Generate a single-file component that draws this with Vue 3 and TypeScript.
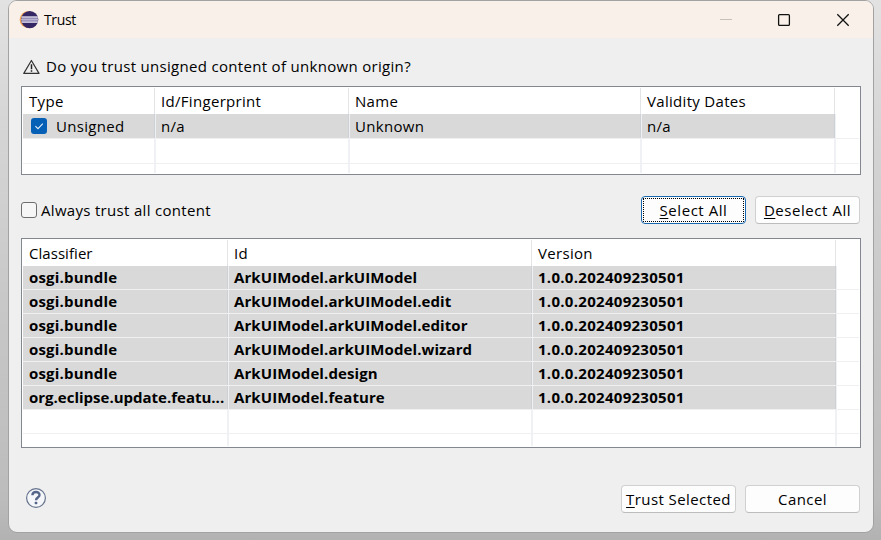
<script setup lang="ts">
interface Artifact {
  classifier: string
  id: string
  version: string
}

const version = '1.0.0.202409230501'
const artifacts: Artifact[] = [
  { classifier: 'osgi.bundle', id: 'ArkUIModel.arkUIModel', version },
  { classifier: 'osgi.bundle', id: 'ArkUIModel.arkUIModel.edit', version },
  { classifier: 'osgi.bundle', id: 'ArkUIModel.arkUIModel.editor', version },
  { classifier: 'osgi.bundle', id: 'ArkUIModel.arkUIModel.wizard', version },
  { classifier: 'osgi.bundle', id: 'ArkUIModel.design', version },
  { classifier: 'org.eclipse.update.featu...', id: 'ArkUIModel.feature', version },
]
</script>

<template>
  <div class="desktop">
    <div class="window">
      <header class="titlebar">
        <svg class="logo" width="20" height="20" viewBox="0 0 20 20">
          <circle cx="9" cy="9.6" r="8.4" fill="#f3a450" />
          <circle cx="10.7" cy="9.6" r="8.6" fill="#352763" />
          <rect x="2.6" y="6.4" width="16.2" height="6.4" fill="#8f86b2" />
          <rect x="2.6" y="6.4" width="16.2" height="1.3" fill="#d5d0e2" />
          <rect x="2.1" y="8.8" width="17.2" height="1.6" fill="#b9b2d0" />
          <rect x="2.6" y="11.5" width="16.2" height="1.3" fill="#d5d0e2" />
        </svg>
        <span class="title">Trust</span>
        <svg class="controls" width="132" height="14" viewBox="0 0 132 14" fill="none">
          <path d="M1 6.5H13" stroke="#c5c0b9" stroke-width="1" />
          <rect x="59.6" y="1.6" width="10.8" height="10.8" rx="1" stroke="#111" stroke-width="1.3" />
          <path d="M118.3 1.3L129.7 12.7M129.7 1.3L118.3 12.7" stroke="#111" stroke-width="1.3" />
        </svg>
      </header>

      <main class="body">
        <div class="question">
          <svg width="18" height="16" viewBox="0 0 18 16" fill="none">
            <path d="M9.4 1.5L17 14.4H1.8Z" stroke="#333" stroke-width="1.2" stroke-linejoin="round" />
            <path d="M9.5 5.2V10.2M9.5 11.3V12.7" stroke="#222" stroke-width="1.5" />
          </svg>
          <span>Do you trust unsigned content of unknown origin?</span>
        </div>

        <div class="table signers">
          <div class="row head">
            <span class="cell">Type</span><span class="cell">Id/Fingerprint</span><span class="cell">Name</span><span class="cell">Validity Dates</span><span class="cell rest"></span>
          </div>
          <div class="row picked">
            <span class="cell with-check">
              <svg width="16" height="16" viewBox="0 0 16 16" fill="none">
                <rect width="16" height="16" rx="3" fill="#0560b6" />
                <path d="M4.4 8.2L7 10.7L11.8 5.7" stroke="#e6f1fb" stroke-width="1.1" />
              </svg>
              <span>Unsigned</span>
            </span><span class="cell">n/a</span><span class="cell">Unknown</span><span class="cell">n/a</span><span class="cell rest"></span>
          </div>
          <div v-for="n in 2" :key="n" class="row"><span v-for="c in 5" :key="c" class="cell"></span></div>
        </div>

        <div class="options">
          <span class="checkbox"></span>
          <span class="always">Always trust all content</span>
          <button class="btn focused"><span><u>S</u>elect All</span></button>
          <button class="btn"><span><u>D</u>eselect All</span></button>
        </div>

        <div class="table artifacts">
          <div class="row head">
            <span class="cell classifier">Classifier</span><span class="cell">Id</span><span class="cell">Version</span><span class="cell rest"></span>
          </div>
          <div v-for="a in artifacts" :key="a.id" class="row picked bold">
            <span class="cell" :class="{ clipped: a.classifier.endsWith('...') }">{{ a.classifier }}</span><span class="cell id">{{ a.id }}</span><span class="cell version">{{ a.version }}</span><span class="cell rest"></span>
          </div>
          <div v-for="n in 2" :key="n" class="row"><span v-for="c in 4" :key="c" class="cell"></span></div>
        </div>

        <footer class="footer">
          <svg class="help" width="22" height="22" viewBox="0 0 22 22" fill="none">
            <circle cx="11" cy="11" r="9.4" fill="#f4f6f9" stroke="#66748e" stroke-width="1.2" />
            <path d="M7.4 8.3C7.5 3.9 14.6 4 14.5 8C14.5 10.5 11 10.6 11 13.3" stroke="#55658a" stroke-width="2.4" />
            <rect x="9.7" y="14.8" width="2.6" height="2.5" rx="0.8" fill="#55658a" />
          </svg>
          <button class="btn wide"><span><u>T</u>rust Selected</span></button>
          <button class="btn wide"><span>Cancel</span></button>
        </footer>
      </main>
    </div>
  </div>
</template>

<style>
body {
  margin: 0;
  overflow: hidden;
}
</style>

<style scoped>
.desktop {
  box-sizing: border-box;
  width: 881px;
  height: 540px;
  padding-left: 8px;
  overflow: hidden;
  background: linear-gradient(180deg, #e2e2e2 0, #d6d6d6 120px, #c8c8c8 300px, #bcbcbc 500px, #b2b2b2 540px);
  font-family: "Open Sans", "Noto Sans", sans-serif;
  font-size: 15px;
  letter-spacing: 0.31px;
  color: #000;
}
.window {
  box-sizing: border-box;
  width: 866px;
  height: 533px;
  border: 1px solid #a2a2a2;
  border-radius: 9px;
  background: #efefef;
  overflow: hidden;
}
.titlebar {
  display: flex;
  align-items: center;
  height: 37px;
  padding: 0 22px 0 10px;
  background: #f9f1e9;
}
.title {
  margin-left: 5px;
  font-size: 14px;
  letter-spacing: -0.35px;
}
.controls {
  margin-left: auto;
}
.body {
  padding: 0 12px;
}
.question {
  display: flex;
  align-items: center;
  gap: 6px;
  height: 48px;
  padding: 7px 0 0 1px;
  box-sizing: border-box;
}
.question svg {
  margin-top: 3px;
}
.table {
  box-sizing: border-box;
  width: 840px;
  padding: 1px;
  border: 1px solid #828790;
  background: #fff;
  overflow: hidden;
}
.signers {
  height: 89px;
  --cols: 133px 194px 292px 194px 1fr;
  --row: 25px;
}
.artifacts {
  height: 210px;
  --cols: 206px 304px 304px 1fr;
  --row: 24px;
}
.row {
  display: grid;
  grid-template-columns: var(--cols);
  box-sizing: border-box;
  height: var(--row);
  border-bottom: 1px solid #f0f0f2;
}
.row:last-child {
  border-bottom: 0;
  height: 9px;
}
.artifacts .row:last-child {
  height: 12px;
}
.row.head {
  height: 26px;
  border-bottom: 0;
}
.cell {
  display: flex;
  align-items: center;
  min-width: 0;
  padding-left: 5px;
  border-right: 2px solid #f0f1f5;
  white-space: nowrap;
  line-height: 20px;
}
.cell:first-child {
  padding-left: 6px;
}
.head .cell {
  border-right: 1px solid #e3e4e6;
  margin-right: 1px;
}
.cell:last-child,
.head .cell:last-child {
  border-right: 0;
}
.picked .cell:not(.rest) {
  background: #d9d9d9;
  border-right: 1px solid #eef0f2;
  box-shadow: inset -1px 0 #cdd1d6;
}
.classifier {
  letter-spacing: 0.05px;
}
.bold {
  font-weight: 700;
  letter-spacing: 0.18px;
}
.bold .cell {
  padding-bottom: 2px;
}
.bold .id {
  letter-spacing: 0.09px;
}
.bold .version {
  letter-spacing: 0.29px;
}
.bold .clipped {
  letter-spacing: 0;
}
.cell.with-check {
  gap: 9px;
  padding-left: 8px;
}
.options {
  display: flex;
  align-items: center;
  height: 63px;
  padding: 7px 1px 0 0;
  box-sizing: border-box;
}
.checkbox {
  box-sizing: border-box;
  width: 16px;
  height: 16px;
  border: 1px solid #6e6e6e;
  border-radius: 3px;
  background: #f6f6f6;
}
.always {
  margin: 0 auto 0 4px;
}
.btn {
  box-sizing: border-box;
  width: 105px;
  height: 28px;
  margin: 0 0 0 9px;
  padding: 0;
  border: 1px solid #d0d0d0;
  border-bottom-color: #bcbcbc;
  border-radius: 4px;
  background: #fdfdfd;
  font: inherit;
  letter-spacing: 0.55px;
  color: inherit;
  white-space: nowrap;
}
.btn.wide {
  width: 115px;
  letter-spacing: 0.42px;
}
.btn.focused {
  border-color: #1767ae;
}
.btn.focused span {
  display: block;
  box-sizing: border-box;
  height: 24px;
  margin: 0 1px;
  border: 1px dotted #000;
  line-height: 22px;
}
.footer {
  display: flex;
  align-items: center;
  height: 102px;
  padding: 0 1px 0 4px;
  box-sizing: border-box;
}
.help {
  margin: 0 auto 2px 0;
}
u {
  text-decoration-thickness: 1px;
  text-underline-offset: 2px;
}
</style>
